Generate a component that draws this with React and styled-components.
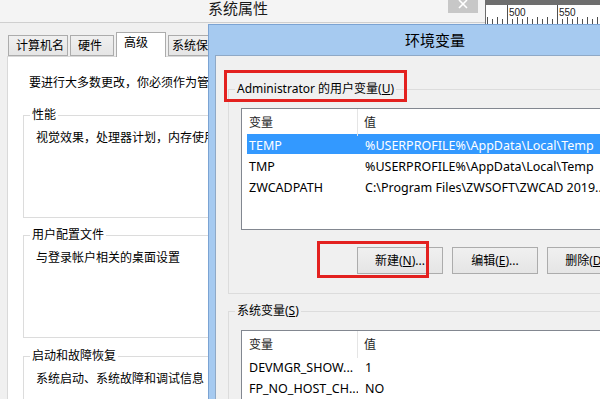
import styled, { createGlobalStyle } from "styled-components";

const GlobalStyle = createGlobalStyle`
  html, body {
    margin: 0;
    padding: 0;
    background: #f0f0f0;
  }
  body {
    font-family: "Noto Sans", "Noto Sans CJK SC", sans-serif;
    font-size: 12px;
    line-height: 16px;
    color: #000;
  }
  * {
    box-sizing: border-box;
  }
`;

const userVars = [
  { name: "TEMP", value: "%USERPROFILE%\\AppData\\Local\\Temp", selected: true },
  { name: "TMP", value: "%USERPROFILE%\\AppData\\Local\\Temp" },
  { name: "ZWCADPATH", value: "C:\\Program Files\\ZWSOFT\\ZWCAD 2019..." },
];

const sysVars = [
  { name: "DEVMGR_SHOW...", value: "1" },
  { name: "FP_NO_HOST_CH...", value: "NO" },
];

const tabs = [
  { label: "计算机名", w: 60, pl: 7 },
  { label: "硬件", w: 44, pl: 7 },
  { label: "高级", w: 50, pl: 7, active: true },
  { label: "系统保护", w: 60, pl: 3 },
];

const Ruler = () => {
  const ticks = [];
  for (let x = 2; x < 115; x += 5) {
    const major = (x - 22) % 50 === 0;
    const mid = !major && (x - 22) % 10 === 0;
    const top = major ? 5 : mid ? 17 : 19;
    ticks.push(<line key={x} x1={x + 0.5} x2={x + 0.5} y1={top} y2={24} stroke="#505050" strokeWidth="1" />);
  }
  return (
    <svg width="115" height="24" viewBox="0 0 115 24">
      <rect x="0" y="0" width="115" height="24" fill="#fff" />
      <rect x="0" y="0" width="115" height="5" fill="#6e6e6e" />
      <line x1="0.5" x2="0.5" y1="0" y2="24" stroke="#6e6e6e" />
      {ticks}
      <text x="24" y="16" fontSize="10" fontFamily="Liberation Sans, sans-serif" fill="#222">500</text>
      <text x="74" y="16" fontSize="10" fontFamily="Liberation Sans, sans-serif" fill="#222">550</text>
    </svg>
  );
};

const App = () => {
  return (
    <>
      <GlobalStyle />
      <Desktop>
        <BackWindow>
          <BackTitleBar>
            <span />
            <WinTitle>系统属性</WinTitle>
            <CloseWrap>
              <CloseBtn>
                <svg width="30" height="13" viewBox="0 0 30 13">
                  <path d="M11 0 L19 8 M19 0 L11 8" stroke="#fff" strokeWidth="1.6" fill="none" />
                </svg>
              </CloseBtn>
            </CloseWrap>
          </BackTitleBar>

          <BackBody>
            <TabStrip>
              {tabs.map((t) => (
                <Tab key={t.label} $w={t.w} $pl={t.pl} $active={t.active}>
                  {t.label}
                </Tab>
              ))}
            </TabStrip>

            <TabPanel>
              <Intro>要进行大多数更改，你必须作为管理员登录。</Intro>

              <BackGroup $mt={16}>
                <Legend>性能</Legend>
                <GroupBody>视觉效果，处理器计划，内存使用，以及虚拟内存</GroupBody>
              </BackGroup>

              <BackGroup $mt={9}>
                <Legend>用户配置文件</Legend>
                <GroupBody>与登录帐户相关的桌面设置</GroupBody>
              </BackGroup>

              <BackGroup $mt={10}>
                <Legend>启动和故障恢复</Legend>
                <GroupBody>系统启动、系统故障和调试信息</GroupBody>
              </BackGroup>
            </TabPanel>
          </BackBody>
        </BackWindow>

        <RulerWindow>
          <Ruler />
        </RulerWindow>

        <FrontWindow>
          <FrontTitle>环境变量</FrontTitle>
          <Client>
            <FrontGroup $mt={25} $pb={19}>
              <Legend>
                Administrator 的用户变量(<u>U</u>)
              </Legend>
              <ListBox $h={122}>
                <ListHeader>
                  <HeadCell>变量</HeadCell>
                  <HeadCell>值</HeadCell>
                </ListHeader>
                {userVars.map((v) => (
                  <ListRow key={v.name} $selected={v.selected}>
                    <NameCell>{v.name}</NameCell>
                    <ValueCell>{v.value}</ValueCell>
                  </ListRow>
                ))}
              </ListBox>

              <ButtonRow>
                <Button>
                  新建(<u>N</u>)...
                </Button>
                <Button>
                  编辑(<u>E</u>)...
                </Button>
                <Button>
                  删除(<u>D</u>)...
                </Button>
              </ButtonRow>
            </FrontGroup>

            <FrontGroup $mt={9} $pb={0}>
              <Legend>
                系统变量(<u>S</u>)
              </Legend>
              <ListBox $h={110}>
                <ListHeader>
                  <HeadCell>变量</HeadCell>
                  <HeadCell>值</HeadCell>
                </ListHeader>
                {sysVars.map((v) => (
                  <ListRow key={v.name}>
                    <NameCell>{v.name}</NameCell>
                    <ValueCell>{v.value}</ValueCell>
                  </ListRow>
                ))}
              </ListBox>
            </FrontGroup>

            {/* red annotation boxes */}
            <RedBox style={{ left: 8, top: 14, width: 183, height: 32 }} />
            <RedBox style={{ left: 101, top: 185, width: 112, height: 37 }} />
          </Client>
        </FrontWindow>
      </Desktop>
    </>
  );
};

const Desktop = styled.div`
  position: relative;
  width: 600px;
  height: 399px;
  overflow: hidden;
  background: #f0f0f0;
`;

const BackWindow = styled.div`
  position: absolute;
  left: -9px;
  top: 0;
  width: 494px;
  height: 520px;
  background: #f0f0f0;
  display: flex;
  flex-direction: column;
`;

const BackTitleBar = styled.div`
  flex: none;
  display: grid;
  grid-template-columns: 1fr auto 1fr;
  height: 23px;
  background: #f4f4f4;
  border-bottom: 1px solid #cfcfcf;
`;

const WinTitle = styled.div`
  font-size: 15px;
  line-height: 17px;
  color: #1a1a1a;
  white-space: nowrap;
`;

const CloseWrap = styled.div`
  display: flex;
  justify-content: flex-end;
  padding-right: 7px;
`;

const CloseBtn = styled.div`
  width: 30px;
  height: 13px;
  background: #c7c7c7;
  display: flex;

  svg {
    display: block;
  }
`;

const BackBody = styled.div`
  flex: 1;
  min-height: 0;
  padding: 9px 0 0 16px;
  display: flex;
  flex-direction: column;
`;

const TabStrip = styled.div`
  flex: none;
  display: flex;
  align-items: flex-end;
  gap: 2px;
  height: 24px;
  padding-left: 1px;
`;

const Tab = styled.div`
  position: relative;
  z-index: ${({ $active }) => ($active ? 2 : 0)};
  width: ${({ $w }) => $w}px;
  flex: none;
  height: ${({ $active }) => ($active ? 25 : 21)}px;
  margin-bottom: ${({ $active }) => ($active ? -1 : 0)}px;
  padding-left: ${({ $pl }) => $pl}px;
  border: 1px solid #acacac;
  border-bottom: ${({ $active }) => ($active ? "none" : "1px solid #acacac")};
  background: ${({ $active }) =>
    $active ? "#fff" : "linear-gradient(#f0f0f0, #e5e5e5)"};
  line-height: 20px;
  white-space: nowrap;
  overflow: hidden;
`;

const TabPanel = styled.div`
  flex: 1;
  background: #fff;
  border: 1px solid #d9d9d9;
  padding-top: 18px;
`;

const Intro = styled.div`
  padding-left: 21px;
  white-space: nowrap;
`;

const Fieldset = styled.fieldset`
  margin: 0;
  padding: 0;
  min-width: 0;
  border: 1px solid #dcdcdc;
`;

const BackGroup = styled(Fieldset)`
  margin: ${({ $mt }) => $mt}px 0 0 15px;
  width: 440px;
`;

const Legend = styled.legend`
  margin-left: 6px;
  padding: 0 2px;
  line-height: 16px;
  white-space: nowrap;
`;

const GroupBody = styled.div`
  height: 94px;
  padding: 7px 12px 0;
  white-space: nowrap;
`;

const RulerWindow = styled.div`
  position: absolute;
  left: 485px;
  top: 0;
  width: 115px;
  height: 24px;

  svg {
    display: block;
  }
`;

const FrontWindow = styled.div`
  position: absolute;
  left: 208px;
  top: 24px;
  width: 454px;
  height: 460px;
  background: #a6caf0;
  border: 1px solid #7ba3d3;
  display: flex;
  flex-direction: column;
  z-index: 3;
`;

const FrontTitle = styled.div`
  flex: none;
  height: 30px;
  line-height: 30px;
  text-align: center;
  font-size: 15px;
  color: #000;
`;

const Client = styled.div`
  position: relative;
  flex: 1;
  min-height: 0;
  margin-left: 6px;
  background: #f0f0f0;
  border-left: 1px solid #8fa9c6;
  border-top: 1px solid #8fa9c6;
  padding-left: 12px;
`;

const FrontGroup = styled(Fieldset)`
  margin-top: ${({ $mt }) => $mt}px;
  padding-bottom: ${({ $pb }) => $pb}px;
  width: 440px;
`;

const ListBox = styled.div`
  margin: 11px 0 0 12px;
  height: ${({ $h }) => $h}px;
  background: #fff;
  border: 1px solid #828790;
  overflow: hidden;
`;

const ListHeader = styled.div`
  display: grid;
  grid-template-columns: 116px 1fr;
  height: 25px;
`;

const HeadCell = styled.div`
  padding-left: 7px;
  line-height: 27px;
  color: #1e1e1e;

  &:first-child {
    border-right: 1px solid #e5e5e5;
  }
  &:last-child {
    padding-left: 6px;
  }
`;

const ListRow = styled.div`
  display: grid;
  grid-template-columns: 111px 1fr;
  height: 20px;
  margin: 0 0 1px 5px;
  font-size: 12.5px;
  line-height: 23px;
  white-space: nowrap;
  overflow: hidden;
  background: ${({ $selected }) => ($selected ? "#3399ff" : "transparent")};
  color: ${({ $selected }) => ($selected ? "#fff" : "#000")};
`;

const NameCell = styled.div`
  padding-left: 2px;
  overflow: hidden;
`;

const ValueCell = styled.div`
  padding-left: 7px;
  overflow: hidden;
`;

const ButtonRow = styled.div`
  display: flex;
  gap: 9px;
  margin-top: 17px;
  padding-left: 128px;
`;

const Button = styled.div`
  flex: none;
  width: 86px;
  height: 27px;
  border: 1px solid #acacac;
  background: linear-gradient(#f0f0f0, #e5e5e5);
  text-align: center;
  line-height: 25px;
  white-space: nowrap;
`;

const RedBox = styled.div`
  position: absolute;
  z-index: 5;
  border: 3px solid #e3211f;
  pointer-events: none;
`;

export default App;
